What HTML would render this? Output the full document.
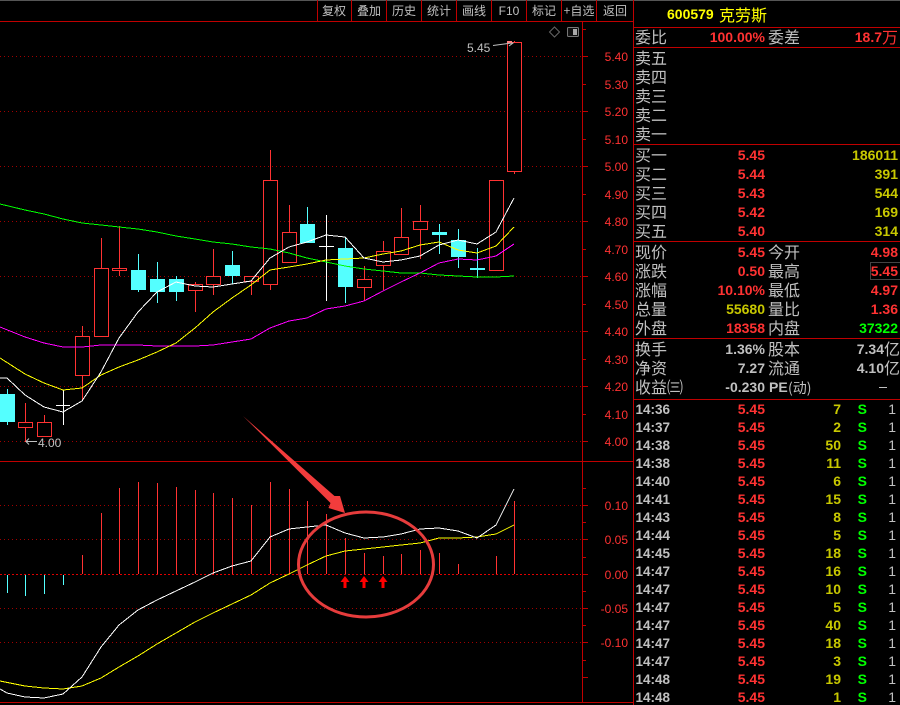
<!DOCTYPE html>
<html><head><meta charset="utf-8"><style>
html,body{margin:0;padding:0;background:#000;width:900px;height:705px;overflow:hidden}
svg{display:block;position:absolute;left:0;top:0}
text{font-family:"Liberation Sans","WenQuanYi Zen Hei","Noto Sans CJK SC",sans-serif}
.c{font-family:"WenQuanYi Zen Hei","Noto Sans CJK SC",sans-serif;font-size:16px;fill:#c0c0c0}
.t{font-family:"WenQuanYi Zen Hei","Noto Sans CJK SC",sans-serif;font-size:12px;fill:#c0c0c0;text-anchor:middle}
.a{font-size:12px;fill:#ff3232;text-anchor:end}
.n{font-size:14px;font-weight:bold;text-anchor:end}
.m{font-size:13.5px}
.r{fill:#ff3232}.y{fill:#c8c800}.g{fill:#00ff00}.w{fill:#c0c0c0}
.l{fill:none;stroke-width:1;shape-rendering:crispEdges}
.cr{fill:#000;stroke:#ff3232;stroke-width:1;shape-rendering:crispEdges}
.cy{fill:#54ffff;shape-rendering:crispEdges}
</style></head><body>
<svg width="900" height="705" viewBox="0 0 900 705">
<rect width="900" height="705" fill="#000"/>
<rect x="0" y="0" width="900" height="1" fill="#555"/>
<!-- grid -->
<g stroke="#a00000" stroke-width="1" stroke-dasharray="1 3" shape-rendering="crispEdges" fill="none">
<path d="M0 56.5H581M0 111.5H581M0 166.5H581M0 221.5H581M0 276.5H581M0 331.5H581M0 386.5H581M0 441.5H581"/>
<path d="M0 505.5H581M0 539.5H581M0 608.5H581M0 642.5H581"/>
</g>
<path d="M0 574.5H581" stroke="#e00000" stroke-width="1" stroke-dasharray="2 2" shape-rendering="crispEdges"/>
<!-- frame -->
<g stroke="#c00000" stroke-width="1" shape-rendering="crispEdges" fill="none">
<path d="M0 21.5H633M0 461.5H633M0 702.5H633M633.5 0V705M582.5 22V702"/>
<path d="M317.5 0V21M351.5 0V21M386.5 0V21M421.5 0V21M456.5 0V21M491.5 0V21M526.5 0V21M561.5 0V21M596.5 0V21"/>
<path d="M634 27.5H900M634 47.5H900M634 144.5H900M634 241.5H900M634 338.5H900M634 399.5H900"/>
<path d="M583 29.5H586M583 56.5H588M583 84.5H586M583 111.5H588M583 139.5H586M583 166.5H588M583 194.5H586M583 221.5H588M583 249.5H586M583 276.5H588M583 304.5H586M583 331.5H588M583 359.5H586M583 386.5H588M583 414.5H586M583 441.5H588"/>
<path d="M583 488.5H586M583 505.5H588M583 522.5H586M583 539.5H588M583 557.5H586M583 574.5H588M583 591.5H586M583 608.5H588M583 625.5H586M583 642.5H588M583 660.5H586M583 677.5H588"/>
</g>
<!-- toolbar -->
<text class="t" x="334" y="15">复权</text><text class="t" x="369" y="15">叠加</text><text class="t" x="404" y="15">历史</text><text class="t" x="439" y="15">统计</text><text class="t" x="474" y="15">画线</text>
<text x="509" y="15" font-size="12" fill="#c0c0c0" text-anchor="middle">F10</text>
<text class="t" x="544" y="15">标记</text><text class="t" x="579" y="15">+自选</text><text class="t" x="615" y="15">返回</text>
<!-- icons -->
<path d="M554.5 27L559.5 32L554.5 37L549.5 32Z" fill="none" stroke="#666" stroke-width="1"/>
<rect x="567.5" y="27.5" width="11" height="9" rx="1" fill="#111" stroke="#777"/>
<rect x="573" y="29" width="4" height="6" fill="#aaa"/>
<!-- wicks -->
<g stroke="#ff3232" stroke-width="1" shape-rendering="crispEdges">
<path d="M25.5 403V442M44.5 415V437M82.5 326V400M101.5 238V337M119.5 226V276M195.5 282V312M213.5 249V295M251.5 276V295M270.5 150V290M289.5 205V263M364.5 266V301M383.5 241V290M401.5 208V255M420.5 205V259M514.5 41V174"/>
</g>
<g stroke="#54ffff" stroke-width="1" shape-rendering="crispEdges">
<path d="M7.5 389V425M138.5 254V292M157.5 262V303M176.5 276V301M232.5 251V284M307.5 207V243M345.5 237V303M439.5 224V254M458.5 229V268M477.5 248V278"/>
</g>
<path d="M63.5 390V425M56 405.5H70M326.5 215V301M319 246.5H334" stroke="#fff" stroke-width="1" shape-rendering="crispEdges"/>
<!-- red bodies -->
<rect class="cr" x="18.5" y="422.5" width="14" height="5"/>
<rect class="cr" x="37.5" y="422.5" width="14" height="14"/>
<rect class="cr" x="75.5" y="336.5" width="14" height="39"/>
<rect class="cr" x="94.5" y="268.5" width="14" height="68"/>
<rect class="cr" x="112.5" y="268.5" width="14" height="2"/>
<rect class="cr" x="188.5" y="284.5" width="14" height="6"/>
<rect class="cr" x="206.5" y="276.5" width="14" height="8"/>
<rect class="cr" x="244.5" y="276.5" width="14" height="5"/>
<rect class="cr" x="263.5" y="180.5" width="14" height="104"/>
<rect class="cr" x="282.5" y="232.5" width="14" height="30"/>
<rect class="cr" x="357.5" y="279.5" width="14" height="8"/>
<rect class="cr" x="376.5" y="251.5" width="14" height="14"/>
<rect class="cr" x="394.5" y="237.5" width="14" height="17"/>
<rect class="cr" x="413.5" y="221.5" width="14" height="8"/>
<rect class="cr" x="489.5" y="180.5" width="14" height="90"/>
<rect class="cr" x="507.5" y="42.5" width="14" height="129"/>
<!-- cyan bodies -->
<rect class="cy" x="0" y="394" width="15" height="28"/>
<rect class="cy" x="131" y="270" width="15" height="20"/>
<rect class="cy" x="150" y="279" width="15" height="13"/>
<rect class="cy" x="169" y="279" width="15" height="13"/>
<rect class="cy" x="225" y="265" width="15" height="11"/>
<rect class="cy" x="300" y="224" width="15" height="19"/>
<rect class="cy" x="338" y="248" width="15" height="39"/>
<rect class="cy" x="432" y="232" width="15" height="3"/>
<rect class="cy" x="451" y="240" width="15" height="17"/>
<rect class="cy" x="470" y="268" width="15" height="2"/>
<!-- MA lines -->
<polyline class="l" stroke="#00ff00" points="0,204 25,210 44,214 63,219 82,223 101,225 119,227 138,229 157,232 176,236 195,239 213,242 232,244 251,247 270,249 289,253 307,258 326,262 345,266 364,269 383,271 401,273 420,273 439,275 458,276 477,277 496,277 514,276"/>
<polyline class="l" stroke="#ff00ff" points="0,327 25,337 44,343 63,347 82,347 101,345 119,345 138,345 157,346 176,346 195,346 213,345 232,342 251,339 270,328 289,321 307,318 326,309 345,306 364,301 383,291 401,282 420,273 439,263 458,259 477,260 496,256 514,244"/>
<polyline class="l" stroke="#ffff00" points="0,358 25,374 44,383 63,390 82,388 101,375 119,367 138,360 157,352 176,343 195,328 213,312 232,298 251,285 270,270 289,267 307,264 326,260 345,259 364,258 383,254 401,251 420,245 439,242 458,250 477,253 496,246 514,227"/>
<polyline class="l" stroke="#ffffff" points="0,378 7,378 25,395 44,407 63,412 82,401 101,372 119,338 138,312 157,292 176,282 195,286 213,287 232,284 251,281 270,258 289,247 307,242 326,235 345,237 364,258 383,262 401,260 420,256 439,245 458,240 477,244 496,232 514,198"/>
<!-- price labels -->
<g class="a">
<text class="a" x="628" y="61">5.40</text><text class="a" x="628" y="89">5.30</text><text class="a" x="628" y="116">5.20</text><text class="a" x="628" y="144">5.10</text><text class="a" x="628" y="171">5.00</text><text class="a" x="628" y="199">4.90</text><text class="a" x="628" y="226">4.80</text><text class="a" x="628" y="254">4.70</text><text class="a" x="628" y="281">4.60</text><text class="a" x="628" y="309">4.50</text><text class="a" x="628" y="336">4.40</text><text class="a" x="628" y="364">4.30</text><text class="a" x="628" y="391">4.20</text><text class="a" x="628" y="419">4.10</text><text class="a" x="628" y="446">4.00</text>
<text class="a" x="628" y="510">0.10</text><text class="a" x="628" y="544">0.05</text><text class="a" x="628" y="579">0.00</text><text class="a" x="628" y="613">-0.05</text><text class="a" x="628" y="647">-0.10</text>
</g>
<text x="467" y="52" font-size="12" fill="#c0c0c0">5.45</text>
<path d="M493 45.5L512 43" stroke="#c0c0c0" fill="none"/><path d="M507 42L513 43L509 46" fill="none" stroke="#c0c0c0"/>
<rect x="507" y="41" width="5" height="2" fill="#ff8080"/>
<text x="38" y="447" font-size="12" fill="#c0c0c0">4.00</text>
<path d="M26 441.5H37M29 438.5L26 441.5L29 444.5" stroke="#c0c0c0" fill="none"/>
<!-- MACD bars -->
<g stroke="#ff3232" stroke-width="1" shape-rendering="crispEdges">
<path d="M82.5 555V574M101.5 513V574M119.5 488V574M138.5 482V574M157.5 483V574M176.5 487V574M195.5 490V574M213.5 493V574M232.5 498V574M251.5 505V574M270.5 482V574M289.5 489V574M307.5 501V574M326.5 514V574M345.5 538V574M364.5 553V574M383.5 556V574M401.5 554V574M420.5 550V574M439.5 553V574M458.5 564V574M496.5 556V574M514.5 501V574"/>
</g>
<path d="M7.5 575V593M25.5 575V596M44.5 575V594M63.5 575V585" stroke="#54ffff" stroke-width="1" shape-rendering="crispEdges"/>
<polyline class="l" stroke="#ffff00" points="0,681 25,686 44,688 63,689 82,686 101,678 119,667 138,656 157,644 176,633 195,622 213,613 232,604 251,595 270,583 289,574 307,565 326,556 345,551 364,549 383,547 401,545 420,543 439,538 458,538 477,537 496,534 514,525"/>
<polyline class="l" stroke="#ffffff" points="0,689 7,693 25,697 44,698 63,694 82,677 101,647 119,625 138,610 157,600 176,591 195,582 213,573 232,566 251,561 270,537 289,529 307,527 326,525 345,533 364,538 383,537 401,534 420,529 439,528 458,531 477,538 496,525 514,489"/>
<!-- annotation -->
<polygon points="243,416 334.5,496 340,496 345,513 328.5,508 330.5,503" fill="#f23c3c"/>
<ellipse cx="366" cy="564.5" rx="67.5" ry="52.5" fill="none" stroke="#e63c3c" stroke-width="3"/>
<g fill="#ff0000">
<polygon points="345,576 349.5,582 346.5,582 346.5,588 343.5,588 343.5,582 340.5,582"/>
<polygon points="364,576 368.5,582 365.5,582 365.5,588 362.5,588 362.5,582 359.5,582"/>
<polygon points="383,576 387.5,582 384.5,582 384.5,588 381.5,588 381.5,582 378.5,582"/>
</g>
<!-- right panel -->
<text x="667" y="19" font-size="14" font-weight="bold" fill="#ffff00">600579</text>
<text class="c" x="719" y="21" style="fill:#ffff00">克劳斯</text>
<text class="c" x="635" y="43">委比</text><text class="n r" x="765" y="42">100.00%</text><text class="c" x="768" y="43">委差</text><text class="n r" x="882" y="42">18.7</text><text class="c" x="882" y="43" style="fill:#ff3232">万</text>
<text class="c" x="635" y="64">卖五</text><text class="c" x="635" y="83">卖四</text><text class="c" x="635" y="102">卖三</text><text class="c" x="635" y="121">卖二</text><text class="c" x="635" y="140">卖一</text>
<text class="c" x="635" y="161">买一</text><text class="n r" x="765" y="160">5.45</text><text class="n y" x="898" y="160">186011</text>
<text class="c" x="635" y="180">买二</text><text class="n r" x="765" y="179">5.44</text><text class="n y" x="898" y="179">391</text>
<text class="c" x="635" y="199">买三</text><text class="n r" x="765" y="198">5.43</text><text class="n y" x="898" y="198">544</text>
<text class="c" x="635" y="218">买四</text><text class="n r" x="765" y="217">5.42</text><text class="n y" x="898" y="217">169</text>
<text class="c" x="635" y="237">买五</text><text class="n r" x="765" y="236">5.40</text><text class="n y" x="898" y="236">314</text>
<text class="c" x="635" y="258">现价</text><text class="n r" x="765" y="257">5.45</text><text class="c" x="768" y="258">今开</text><text class="n r" x="898" y="257">4.98</text>
<text class="c" x="635" y="277">涨跌</text><text class="n r" x="765" y="276">0.50</text><text class="c" x="768" y="277">最高</text><text class="n r" x="898" y="276">5.45</text>
<rect x="870.5" y="262.5" width="30" height="17" fill="none" stroke="#444" shape-rendering="crispEdges"/>
<text class="c" x="635" y="296">涨幅</text><text class="n r" x="765" y="295">10.10%</text><text class="c" x="768" y="296">最低</text><text class="n r" x="898" y="295">4.97</text>
<text class="c" x="635" y="315">总量</text><text class="n y" x="765" y="314">55680</text><text class="c" x="768" y="315">量比</text><text class="n r" x="898" y="314">1.36</text>
<text class="c" x="635" y="334">外盘</text><text class="n r" x="765" y="333">18358</text><text class="c" x="768" y="334">内盘</text><text class="n g" x="898" y="333">37322</text>
<text class="c" x="635" y="355">换手</text><text class="n w" x="765" y="354">1.36%</text><text class="c" x="768" y="355">股本</text><text class="n w" x="884" y="354">7.34</text><text class="c" x="884" y="355">亿</text>
<text class="c" x="635" y="374">净资</text><text class="n w" x="765" y="373">7.27</text><text class="c" x="768" y="374">流通</text><text class="n w" x="884" y="373">4.10</text><text class="c" x="884" y="374">亿</text>
<text class="c" x="635" y="393">收益㈢</text><text class="n w" x="765" y="392">-0.230</text>
<text x="769" y="392" font-size="14" font-weight="bold" fill="#c0c0c0">PE</text><text class="c" x="788" y="393" style="font-size:14px">(动)</text>
<rect x="879" y="387" width="8" height="1" fill="#c0c0c0"/>
<!-- ticks -->
<g>
<text class="n m w" x="670" y="414">14:36</text><text class="n r" x="765" y="414">5.45</text><text class="n y" x="841" y="414">7</text><text class="n g" x="867" y="414">S</text><text class="n w" x="896" y="414" style="font-weight:normal">1</text>
<text class="n m w" x="670" y="432">14:37</text><text class="n r" x="765" y="432">5.45</text><text class="n y" x="841" y="432">2</text><text class="n g" x="867" y="432">S</text><text class="n w" x="896" y="432" style="font-weight:normal">1</text>
<text class="n m w" x="670" y="450">14:38</text><text class="n r" x="765" y="450">5.45</text><text class="n y" x="841" y="450">50</text><text class="n g" x="867" y="450">S</text><text class="n w" x="896" y="450" style="font-weight:normal">1</text>
<text class="n m w" x="670" y="468">14:38</text><text class="n r" x="765" y="468">5.45</text><text class="n y" x="841" y="468">11</text><text class="n g" x="867" y="468">S</text><text class="n w" x="896" y="468" style="font-weight:normal">1</text>
<text class="n m w" x="670" y="486">14:40</text><text class="n r" x="765" y="486">5.45</text><text class="n y" x="841" y="486">6</text><text class="n g" x="867" y="486">S</text><text class="n w" x="896" y="486" style="font-weight:normal">1</text>
<text class="n m w" x="670" y="504">14:41</text><text class="n r" x="765" y="504">5.45</text><text class="n y" x="841" y="504">15</text><text class="n g" x="867" y="504">S</text><text class="n w" x="896" y="504" style="font-weight:normal">1</text>
<text class="n m w" x="670" y="522">14:43</text><text class="n r" x="765" y="522">5.45</text><text class="n y" x="841" y="522">8</text><text class="n g" x="867" y="522">S</text><text class="n w" x="896" y="522" style="font-weight:normal">1</text>
<text class="n m w" x="670" y="540">14:44</text><text class="n r" x="765" y="540">5.45</text><text class="n y" x="841" y="540">5</text><text class="n g" x="867" y="540">S</text><text class="n w" x="896" y="540" style="font-weight:normal">1</text>
<text class="n m w" x="670" y="558">14:45</text><text class="n r" x="765" y="558">5.45</text><text class="n y" x="841" y="558">18</text><text class="n g" x="867" y="558">S</text><text class="n w" x="896" y="558" style="font-weight:normal">1</text>
<text class="n m w" x="670" y="576">14:47</text><text class="n r" x="765" y="576">5.45</text><text class="n y" x="841" y="576">16</text><text class="n g" x="867" y="576">S</text><text class="n w" x="896" y="576" style="font-weight:normal">1</text>
<text class="n m w" x="670" y="594">14:47</text><text class="n r" x="765" y="594">5.45</text><text class="n y" x="841" y="594">10</text><text class="n g" x="867" y="594">S</text><text class="n w" x="896" y="594" style="font-weight:normal">1</text>
<text class="n m w" x="670" y="612">14:47</text><text class="n r" x="765" y="612">5.45</text><text class="n y" x="841" y="612">5</text><text class="n g" x="867" y="612">S</text><text class="n w" x="896" y="612" style="font-weight:normal">1</text>
<text class="n m w" x="670" y="630">14:47</text><text class="n r" x="765" y="630">5.45</text><text class="n y" x="841" y="630">40</text><text class="n g" x="867" y="630">S</text><text class="n w" x="896" y="630" style="font-weight:normal">1</text>
<text class="n m w" x="670" y="648">14:47</text><text class="n r" x="765" y="648">5.45</text><text class="n y" x="841" y="648">18</text><text class="n g" x="867" y="648">S</text><text class="n w" x="896" y="648" style="font-weight:normal">1</text>
<text class="n m w" x="670" y="666">14:47</text><text class="n r" x="765" y="666">5.45</text><text class="n y" x="841" y="666">3</text><text class="n g" x="867" y="666">S</text><text class="n w" x="896" y="666" style="font-weight:normal">1</text>
<text class="n m w" x="670" y="684">14:48</text><text class="n r" x="765" y="684">5.45</text><text class="n y" x="841" y="684">19</text><text class="n g" x="867" y="684">S</text><text class="n w" x="896" y="684" style="font-weight:normal">1</text>
<text class="n m w" x="670" y="702">14:48</text><text class="n r" x="765" y="702">5.45</text><text class="n y" x="841" y="702">1</text><text class="n g" x="867" y="702">S</text><text class="n w" x="896" y="702" style="font-weight:normal">1</text>
</g>
</svg>
</body></html>
